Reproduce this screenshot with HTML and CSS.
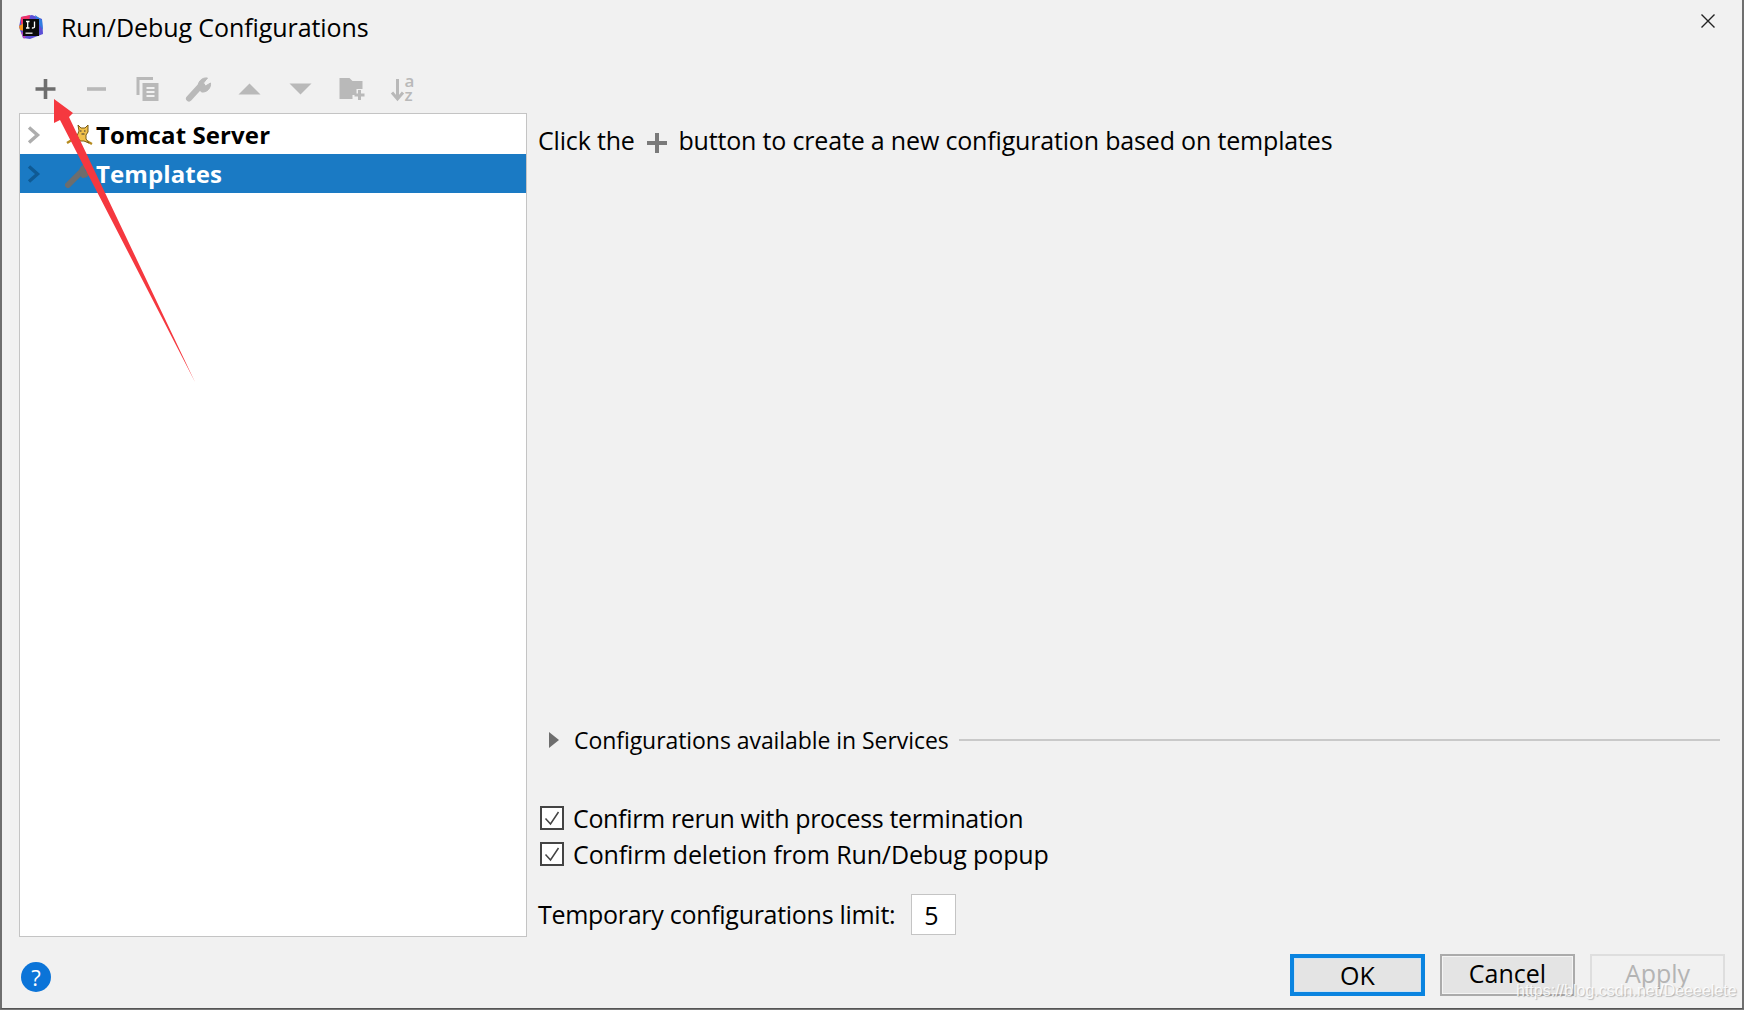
FILE: index.html
```html
<!DOCTYPE html>
<html lang="en">
<head>
<meta charset="utf-8">
<title>Run/Debug Configurations</title>
<link rel="stylesheet" href="styles.css">
</head>
<body>
<div class="dialog">
  <header class="titlebar">
    <svg class="app-logo" width="26" height="26" viewBox="0 0 26 26">
      <polygon points="3,3 14,1 24,5 25,20 12,25 5,24 1,13" fill="#5b4fd6"/>
      <polygon points="3,3 12,1 11,10 3,10" fill="#f0336a"/>
      <polygon points="1,12 6,9 6,17 2,16" fill="#f7941d"/>
      <polygon points="3,18 9,20 6,25" fill="#c13fb8"/>
      <polygon points="17,1 24,6 25,16 19,7" fill="#2f7de1"/>
      <rect x="5" y="5" width="16" height="17" fill="#0b0b0b"/>
      <rect x="7.500" y="18.500" width="7" height="1.400" fill="#ddd"/>
      <path d="M8 7.500h3.500M9.700 7.500v6.500M8 14h3.500M16.500 7.500v5.200q0 1.500-2.600 1.300" fill="none" stroke="#fff" stroke-width="1.300"/>
    </svg>
    <span class="title">Run/Debug Configurations</span>
    <svg class="close" width="16" height="16" viewBox="0 0 16 16"><path d="M1.500 1.500L14.500 14.500M14.500 1.500L1.500 14.500" stroke="#222" stroke-width="1.400" fill="none"/></svg>
  </header>

  <div class="toolbar">
    <svg class="tool" width="24" height="24" viewBox="0 0 24 24"><path d="M12 2v20M2 12h20" stroke="#6e6e6e" stroke-width="3.600"/></svg>
    <svg class="tool" width="24" height="24" viewBox="0 0 24 24"><path d="M2.500 12h19" stroke="#b9b9b9" stroke-width="3.600"/></svg>
    <svg class="tool" width="24" height="26" viewBox="0 0 24 26"><path d="M2.500 19V2.500h15" fill="none" stroke="#b9b9b9" stroke-width="3"/><path d="M7 7h16v18H7z" fill="#b9b9b9"/><path d="M11 12h8M11 16h8M11 20h8" stroke="#f1f1f1" stroke-width="1.800"/></svg>
    <svg class="tool" width="26" height="26" viewBox="0 0 26 26"><path d="M3.500 22.500L14 11" stroke="#b9b9b9" stroke-width="6" stroke-linecap="round"/><path d="M13 12a8 8 0 0 1 9-10l-4 5 2 3 5-3a8 8 0 0 1-9 9z" fill="#b9b9b9" stroke="#b9b9b9" stroke-width="1"/></svg>
    <svg class="tool" width="24" height="24" viewBox="0 0 24 24"><polygon points="12,6.500 23,17.500 1,17.500" fill="#b9b9b9"/></svg>
    <svg class="tool" width="24" height="24" viewBox="0 0 24 24"><polygon points="1,6.500 23,6.500 12,17.500" fill="#b9b9b9"/></svg>
    <svg class="tool" width="28" height="24" viewBox="-1 0 28 24"><path d="M1 1h10l3 3h10v8h-6v6h-4v4H1z" fill="#b9b9b9"/><path d="M21 13v10M16 18h10" stroke="#b9b9b9" stroke-width="3"/></svg>
    <svg class="tool" width="26" height="26" viewBox="0 0 26 26"><path d="M8 3v20M2.500 16.500L8 23l5.500-6.500" fill="none" stroke="#b9b9b9" stroke-width="3"/><text class="sort-a" x="15" y="11">a</text><text class="sort-a" x="15" y="25">z</text></svg>
  </div>

  <div class="body">
    <aside class="tree">
      <div class="row">
        <svg class="chev" width="14" height="18" viewBox="0 0 14 18"><path d="M2 1.500L10.500 9 2 16.500" fill="none" stroke="#adadad" stroke-width="3.400"/></svg>
        <svg class="row-icon" width="28" height="28" viewBox="0 0 28 28">
          <path d="M2 22l8-5M18 18l9 5" stroke="#b58a1e" stroke-width="2.400"/>
          <path d="M13 4l3 3 4 0 3-3 0 7-2 3 0 4 3 4-5-2-4 0-3-5 2-5z" fill="#f0c04a" stroke="#7a5a12" stroke-width="1"/>
          <path d="M15 10h1.500M19 10h1.500M16.500 13h3" stroke="#333" stroke-width="1.200"/>
        </svg>
        <span class="label bold">Tomcat Server</span>
      </div>
      <div class="row selected">
        <svg class="chev" width="14" height="18" viewBox="0 0 14 18"><path d="M2 1.500L10.500 9 2 16.500" fill="none" stroke="#0f5a94" stroke-width="3.400"/></svg>
        <svg class="row-icon" width="28" height="28" viewBox="0 0 28 28"><path d="M3 25L15 13" stroke="#6d6d6d" stroke-width="6" stroke-linecap="round"/><path d="M14 13a8 8 0 0 1 9-9l-3 6 3 3 3-3a8 8 0 0 1-9 8z" fill="#6d6d6d"/></svg>
        <span class="label bold">Templates</span>
      </div>
    </aside>

    <main class="panel">
      <p class="hint">Click the <svg class="hint-plus" width="20" height="20" viewBox="0 0 20 20"><path d="M10 0v20M0 10h20" stroke="#7a7a7a" stroke-width="4"/></svg> button to create a new configuration based on templates</p>
      <div class="spacer"></div>
      <div class="services">
        <svg class="tri" width="12" height="18" viewBox="0 0 12 18"><polygon points="1,1 11,9 1,17" fill="#6e6e6e"/></svg>
        <span>Configurations available in Services</span>
        <span class="services-line"></span>
      </div>
      <label class="check first">
        <svg width="24" height="24" viewBox="0 0 24 24"><rect x="1" y="1" width="22" height="22" fill="#fff" stroke="#444" stroke-width="2"/><path d="M5.500 12.500l5 5.500 8-12" fill="none" stroke="#444" stroke-width="1.500"/></svg>
        <span class="rerun">Confirm rerun with process termination</span>
      </label>
      <label class="check">
        <svg width="24" height="24" viewBox="0 0 24 24"><rect x="1" y="1" width="22" height="22" fill="#fff" stroke="#444" stroke-width="2"/><path d="M5.500 12.500l5 5.500 8-12" fill="none" stroke="#444" stroke-width="1.500"/></svg>
        <span class="deletion">Confirm deletion from Run/Debug popup</span>
      </label>
      <div class="limit">
        <span class="limit-label">Temporary configurations limit:</span>
        <span class="limit-input">5</span>
      </div>
    </main>
  </div>

  <footer class="footer">
    <span class="help">?</span>
    <div class="buttons">
      <button class="btn default">OK</button>
      <button class="btn">Cancel</button>
      <button class="btn disabled">Apply</button>
    </div>
  </footer>
</div>

<svg class="arrow" width="220" height="400" viewBox="0 0 220 400"><polygon points="54,99 73,113 69,117 195,382 60,120 54,123" fill="#f5383f"/></svg>
<span class="watermark">https://blog.csdn.net/Deeeelete</span>
</body>
</html>
```
FILE: styles.css
```css
* { box-sizing: border-box; }
html, body { margin: 0; height: 100%; }
body {
  width: 1744px;
  height: 1010px;
  overflow: hidden;
  background: #777;
  font-family: "Open Sans", "Noto Sans", sans-serif;
  font-size: 25px;
  color: #000;
  position: relative;
}
.dialog {
  width: 1744px;
  height: 1009px;
  background: #f1f1f1;
  border-left: 2px solid #6f6f6f;
  border-right: 2px solid #6f6f6f;
  border-bottom: 1px solid #555;
  display: flex;
  flex-direction: column;
}
.titlebar {
  height: 54px;
  display: flex;
  align-items: center;
  padding-left: 16px;
  flex: none;
}
.app-logo { flex: none; }
.title { margin-left: 17px; font-size: 25px; letter-spacing: -0.08px; }
.close { margin-left: auto; margin-right: 26px; margin-top: -13px; }
.toolbar {
  height: 59px;
  flex: none;
  display: flex;
  align-items: center;
  padding-left: 18px;
  padding-top: 11px;
}
.tool { width: 51px; flex: none; overflow: visible; }
.sort-a { font-size: 17px; fill: #b9b9b9; font-weight: 600; }
.body { display: flex; height: 824px; flex: none; }
.tree {
  width: 508px;
  margin-left: 17px;
  background: #fff;
  border: 1px solid #c4c4c4;
  padding-top: 1px;
  flex: none;
  font-size: 24px;
}
.row { height: 39px; display: flex; align-items: center; padding-left: 7px; }
.row.selected { background: #1a7ac4; color: #fff; }
.chev { flex: none; }
.row-icon { flex: none; margin-left: 24px; }
.label { margin-left: 3px; letter-spacing: 0.1px; }
.bold { font-weight: 700; }
.panel {
  flex: 1;
  min-width: 0;
  display: flex;
  flex-direction: column;
  padding-left: 11px;
  padding-right: 22px;
}
.hint { margin: 10px 0 0; height: 34px; line-height: 34px; white-space: nowrap; letter-spacing: -0.17px; }
.hint-plus { vertical-align: -3px; margin: 0 5px 0 6px; }
.spacer { flex: 1; }
.services { display: flex; align-items: center; height: 34px; padding-left: 10px; font-size: 23px; letter-spacing: -0.06px; }
.tri { flex: none; margin-right: 14px; }
.services-line { flex: 1; height: 2px; background: #c9c9c9; margin-left: 10px; }
.check { display: flex; align-items: center; height: 36px; gap: 9px; margin-left: 2px; }
.check.first { margin-top: 43px; }
.rerun { letter-spacing: -0.34px; }
.deletion { letter-spacing: -0.12px; }
.limit { display: flex; align-items: center; margin-top: 22px; margin-bottom: 2px; height: 41px; gap: 16px; letter-spacing: -0.29px; }
.limit-label { padding-bottom: 2px; }
.limit-input {
  width: 45px;
  height: 41px;
  background: #fff;
  border: 1px solid #c4c4c4;
  display: flex;
  align-items: center;
  padding-left: 12px;
}
.footer {
  flex: 1;
  display: flex;
  align-items: flex-start;
  justify-content: space-between;
  padding: 17px 17px 0 19px;
}
.help {
  width: 30px;
  height: 30px;
  margin-top: 8px;
  border-radius: 50%;
  background: #0b74d8;
  color: #fff;
  font-size: 22px;
  display: flex;
  align-items: center;
  justify-content: center;
}
.buttons { display: flex; gap: 15px; }
.btn {
  width: 135px;
  height: 42px;
  background: #e4e4e4;
  border: 2px solid #ababab;
  box-shadow: inset 0 0 0 1px #f4f4f4;
  font: inherit;
  color: #000;
  padding: 0 0 4px;
}
.btn.default { border: 4px solid #0a84e0; box-shadow: inset 0 0 0 1px #cfe2f2; padding-bottom: 6px; }
.btn.disabled { background: #f1f1f1; border-color: #dedede; box-shadow: none; color: #b4b4b4; }
.arrow { position: absolute; left: 0; top: 0; }
.watermark {
  position: absolute;
  left: 1516px;
  top: 982px;
  font-family: "Liberation Sans", sans-serif;
  font-size: 16px;
  color: rgba(255,255,255,0.85);
  text-shadow: 1px 1px 1px rgba(120,120,120,0.45);
}
```
